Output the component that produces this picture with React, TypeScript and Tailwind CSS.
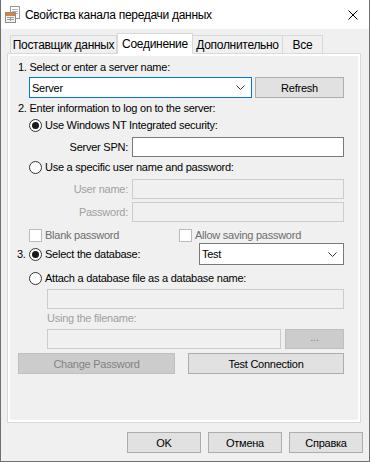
import React from "react";

const ui = "font-['Liberation_Sans',Arial,sans-serif] text-[11px] leading-[14px] tracking-[-0.25px]";
const seg = "font-['Liberation_Sans',Arial,sans-serif] text-[12px] tracking-[-0.3px] whitespace-nowrap";

function Radio({ checked }: { checked?: boolean }) {
  return (
    <span className="flex size-[13px] shrink-0 items-center justify-center rounded-full border border-[#333] bg-white">
      {checked && <span className="size-[7px] rounded-full bg-[#1a1a1a]" />}
    </span>
  );
}

function Check() {
  return <span className="size-[13px] shrink-0 border border-[#bcbcbc] bg-white" />;
}

function Chevron() {
  return (
    <svg width="9" height="5" viewBox="0 0 9 5" className="shrink-0">
      <path d="M0.5 0.5 L4.5 4.5 L8.5 0.5" fill="none" stroke="#333" strokeWidth="1" />
    </svg>
  );
}

function Box({ w, disabled }: { w: string; disabled?: boolean }) {
  return (
    <div
      className={`h-[20px] shrink-0 border ${w} ${
        disabled ? "border-[#cccccc] bg-[#f0f0f0]" : "border-[#7a7a7a] bg-white"
      }`}
    />
  );
}

function Btn({ label, w, disabled }: { label: string; w: string; disabled?: boolean }) {
  return (
    <div
      className={`flex h-[21px] shrink-0 items-center justify-center border ${w} ${
        disabled ? "border-[#bfbfbf] bg-[#cccccc] text-[#838383]" : "border-[#adadad] bg-[#e1e1e1] text-black"
      }`}
    >
      {label}
    </div>
  );
}

function TitleIcon() {
  return (
    <svg width="16" height="18" viewBox="0 0 16 18">
      <rect x="5.5" y="0.5" width="9" height="12" fill="#fff" stroke="#9a9a9a" />
      <path d="M7 3.5h6M7 5.5h6M7 7.5h6" stroke="#b5b5b5" />
      <rect x="0.5" y="6.5" width="10" height="10" fill="#f3f3f3" stroke="#8d8d8d" />
      <rect x="1" y="7" width="9" height="3" fill="#d9823b" />
      <path d="M2 11.5h7M2 13.5h7M5.5 11v4" stroke="#9c9c9c" />
    </svg>
  );
}

export default function App() {
  return (
    <div className="flex h-[462px] w-[370px] flex-col border-x border-b border-[#707070] bg-[#f0f0f0] text-black">
      {/* title bar */}
      <div className="flex h-[29px] shrink-0 items-center bg-white pl-[4px]">
        <TitleIcon />
        <span className={`${seg} ml-[4px] text-black`}>Свойства канала передачи данных</span>
        <svg width="10" height="10" viewBox="0 0 10 10" className="ml-auto mr-[11px]">
          <path d="M0.5 0.5 L9.5 9.5 M9.5 0.5 L0.5 9.5" stroke="#000" strokeWidth="1" />
        </svg>
      </div>

      <div className="flex flex-1 flex-col pl-[6px] pr-[8px] pt-[4px]">
        {/* tabs */}
        <div className={`${seg} relative z-10 flex items-end pl-[3px] leading-[18px]`}>
          <div className="flex h-[18px] w-[107px] items-center justify-center border-x border-t border-[#d9d9d9] bg-[#f0f0f0]">
            Поставщик данных
          </div>
          <div className="-mb-px flex h-[21px] w-[76px] items-center justify-center border-x border-t border-[#d9d9d9] bg-white pb-[1px]">
            Соединение
          </div>
          <div className="flex h-[18px] w-[90px] items-center justify-center border-r border-t border-[#d9d9d9] bg-[#f0f0f0]">
            Дополнительно
          </div>
          <div className="flex h-[18px] w-[40px] items-center justify-center border-r border-t border-[#d9d9d9] bg-[#f0f0f0]">
            Все
          </div>
        </div>

        {/* panel */}
        <div className={`${ui} flex h-[370px] flex-col border border-[#d9d9d9] bg-[#f0f0f0] pr-[16px] pt-[6px] shadow-[inset_0_0_0_2px_#fff]`}>
          <div className="h-[14px] pl-[10px]">1. Select or enter a server name:</div>

          <div className="mt-[3px] flex h-[21px] pl-[21px]">
            <div className="flex h-[21px] w-[223px] items-center border border-[#0078d7] bg-white pl-[2px] pr-[6px]">
              <span className="flex-1">Server</span>
              <Chevron />
            </div>
            <div className="ml-auto">
              <Btn label="Refresh" w="w-[89px]" />
            </div>
          </div>

          <div className="mt-[3px] h-[14px] pl-[10px]">2. Enter information to log on to the server:</div>

          <div className="mt-[3px] flex h-[14px] items-center gap-[3px] pl-[21px]">
            <Radio checked />
            <span>Use Windows NT Integrated security:</span>
          </div>

          <div className="mt-[5px] flex items-center">
            <span className="w-[120px] text-right">Server SPN:</span>
            <div className="ml-auto">
              <Box w="w-[212px]" />
            </div>
          </div>

          <div className="mt-[3px] flex h-[14px] items-center gap-[3px] pl-[21px]">
            <Radio />
            <span>Use a specific user name and password:</span>
          </div>

          <div className="mt-[5px] flex items-center">
            <span className="w-[120px] text-right text-[#a0a0a0]">User name:</span>
            <div className="ml-auto">
              <Box w="w-[212px]" disabled />
            </div>
          </div>

          <div className="mt-[3px] flex items-center">
            <span className="w-[120px] text-right text-[#a0a0a0]">Password:</span>
            <div className="ml-auto">
              <Box w="w-[212px]" disabled />
            </div>
          </div>

          <div className="mt-[6px] flex h-[14px] items-center pl-[21px] text-[#6d6d6d]">
            <div className="flex w-[150px] items-center gap-[3px]">
              <Check />
              <span>Blank password</span>
            </div>
            <div className="flex items-center gap-[3px]">
              <Check />
              <span>Allow saving password</span>
            </div>
          </div>

          <div className="mt-[1px] flex h-[22px] items-center pl-[9px]">
            <span className="w-[12px]">3.</span>
            <Radio checked />
            <span className="ml-[3px]">Select the database:</span>
            <div className="ml-auto flex h-[22px] w-[145px] items-center border border-[#7a7a7a] bg-white pl-[2px] pr-[6px]">
              <span className="flex-1">Test</span>
              <Chevron />
            </div>
          </div>

          <div className="mt-[6px] flex h-[14px] items-center gap-[3px] pl-[21px]">
            <Radio />
            <span>Attach a database file as a database name:</span>
          </div>

          <div className="mt-[4px] flex pl-[39px]">
            <Box w="w-[297px]" disabled />
          </div>

          <div className="mt-[2px] h-[14px] pl-[39px] text-[#a0a0a0]">Using the filename:</div>

          <div className="mt-[4px] flex pl-[39px]">
            <Box w="w-[234px]" disabled />
            <div className="ml-auto flex h-[20px] w-[59px] items-start justify-center border border-[#bfbfbf] bg-[#cccccc] text-[#838383]">
              ...
            </div>
          </div>

          <div className="mt-[4px] flex pl-[10px]">
            <Btn label="Change Password" w="w-[157px]" disabled />
            <div className="ml-auto">
              <Btn label="Test Connection" w="w-[156px]" />
            </div>
          </div>
        </div>

        {/* dialog buttons */}
        <div className={`${ui} mt-[9px] flex justify-end`}>
          <div className="mr-[-2px] flex gap-[7px]">
            <Btn label="OK" w="w-[74px]" />
            <Btn label="Отмена" w="w-[74px]" />
            <Btn label="Справка" w="w-[74px]" />
          </div>
        </div>
      </div>
    </div>
  );
}
